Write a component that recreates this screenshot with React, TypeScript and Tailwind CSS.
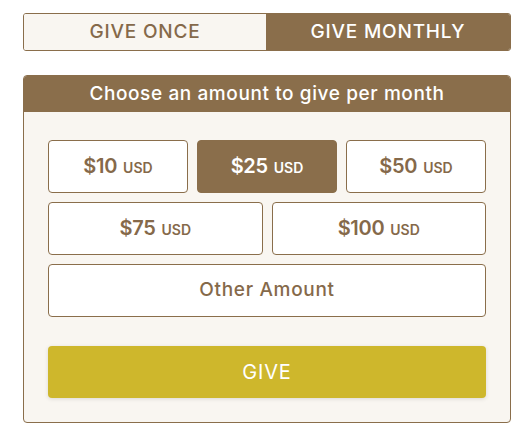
import React from "react";

function Amount({ value, active }: { value: string; active?: boolean }) {
  return (
    <button
      className={
        "h-[53px] rounded-[4px] border border-[#8A6E4B] flex items-baseline justify-center gap-[6px] " +
        (active ? "bg-[#8A6E4B] text-white" : "bg-white text-[#85694A]")
      }
    >
      <span className="text-[20px] font-semibold tracking-[-0.3px] leading-[51px]">{value}</span>
      <span className="text-[14px] font-semibold">USD</span>
    </button>
  );
}

export default function App() {
  return (
    <div
      className="w-[516px] h-[438px] bg-white pt-[13px] pl-[23px]"
      style={{ fontFamily: "Inter, 'Noto Sans', sans-serif" }}
    >
      <div className="w-[488px] h-[38px] flex rounded-[3px] border border-[#8A6E4B] overflow-hidden">
        <div className="w-[242px] bg-[#F9F6F1] text-[#85694A] flex items-center justify-center text-[19px] tracking-[0.8px] font-medium">
          GIVE ONCE
        </div>
        <div className="flex-1 bg-[#8A6E4B] text-white flex items-center justify-center text-[19px] tracking-[0.8px] font-medium">
          GIVE MONTHLY
        </div>
      </div>

      <div className="mt-[24px] w-[488px] rounded-[4px] border border-[#8A6E4B] bg-[#F9F6F1] overflow-hidden">
        <div className="h-[36px] bg-[#8A6E4B] text-white flex items-center justify-center text-[19px] tracking-[0.6px] font-medium">
          Choose an amount to give per month
        </div>
        <div className="px-[24px] pt-[28px] pb-[24px]">
          <div className="grid grid-cols-3 gap-[9px]">
            <Amount value="$10" />
            <Amount value="$25" active />
            <Amount value="$50" />
          </div>
          <div className="grid grid-cols-2 gap-[9px] mt-[9px]">
            <Amount value="$75" />
            <Amount value="$100" />
          </div>
          <button className="mt-[9px] w-full h-[53px] rounded-[4px] border border-[#8A6E4B] bg-white text-[#85694A] text-[19px] tracking-[0.7px] font-medium">
            Other Amount
          </button>
          <button className="mt-[29px] w-full h-[52px] rounded-[4px] bg-[#CEB72C] text-white text-[20px] tracking-[0.8px] shadow-[0_1px_4px_rgba(0,0,0,0.12)]">
            GIVE
          </button>
        </div>
      </div>
    </div>
  );
}
